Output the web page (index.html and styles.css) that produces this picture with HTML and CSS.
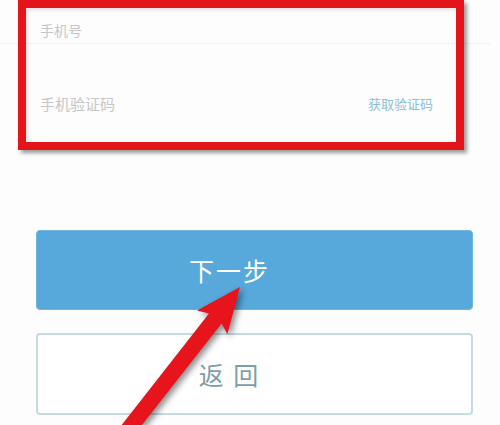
FILE: index.html
```html
<!DOCTYPE html>
<html lang="zh-CN">
<head>
<meta charset="utf-8">
<title>手机验证</title>
<link rel="stylesheet" href="styles.css">
</head>
<body>
<main class="page">
  <section class="form">
    <div class="field">
      <span class="label">手机号</span>
    </div>
    <div class="field field-code">
      <span class="label label-code">手机验证码</span>
      <span class="get-code">获取验证码</span>
    </div>
  </section>
  <div class="actions">
    <button class="btn btn-primary">下一步</button>
    <button class="btn btn-back">返 回</button>
  </div>
  <div class="annot-box"></div>
  <svg class="annot-arrow" viewBox="0 0 500 425" width="500" height="425">
    <polygon points="240,287 197,310.5 209,313.6 110.3,439.5 122.9,449.3 221.6,323.4 227.4,334.3" fill="#e8141c"/>
  </svg>
</main>
</body>
</html>
```
FILE: styles.css
```css
html, body {
  margin: 0;
  padding: 0;
  background: #fdfdfd;
}
body {
  width: 500px;
  height: 425px;
  overflow: hidden;
  font-family: "Noto Sans CJK SC", "Noto Sans", sans-serif;
}
.page {
  position: relative;
  width: 500px;
  height: 425px;
}
.form {
  height: 150px;
  display: flex;
  flex-direction: column;
}
.field {
  box-sizing: border-box;
  height: 44px;
  margin-right: 10px;
  padding: 22px 0 0 40px;
  border-bottom: 1px solid #f1f2f3;
}
.field-code {
  height: auto;
  border-bottom: none;
  padding: 52px 57px 0 40px;
  display: flex;
  justify-content: space-between;
  align-items: center;
}
.label {
  font-size: 14px;
  line-height: 16px;
  color: #c6c6c6;
  display: block;
}
.label-code {
  font-size: 15px;
}
.get-code {
  font-size: 13px;
  line-height: 16px;
  color: #8dbfd6;
}
.actions {
  margin-top: 80px;
  padding: 0 27px 0 36px;
  display: flex;
  flex-direction: column;
  gap: 23px;
}
.btn {
  box-sizing: border-box;
  width: 100%;
  border-radius: 4px;
  font-family: "Noto Sans CJK SC", "Noto Sans", sans-serif;
  font-size: 25px;
  letter-spacing: 2px;
  padding: 0 50px 0 0;
  display: flex;
  align-items: center;
  justify-content: center;
}
.btn-primary {
  height: 80px;
  background: #57a8db;
  border: 1px solid #6fb5df;
  color: #ffffff;
}
.btn-back {
  height: 82px;
  background: #ffffff;
  border: 2px solid #c5dbe2;
  color: #7c9eac;
}
.annot-box {
  position: absolute;
  left: 18px;
  top: 0;
  width: 446px;
  height: 150px;
  box-sizing: border-box;
  border: 8px solid #e3141a;
  box-shadow: 3px 3px 4px rgba(0, 0, 0, 0.4), inset 2px 2px 4px rgba(0, 0, 0, 0.12);
}
.annot-arrow {
  position: absolute;
  left: 0;
  top: 0;
  pointer-events: none;
  filter: drop-shadow(3px 3px 3px rgba(0, 0, 0, 0.45));
}
```
